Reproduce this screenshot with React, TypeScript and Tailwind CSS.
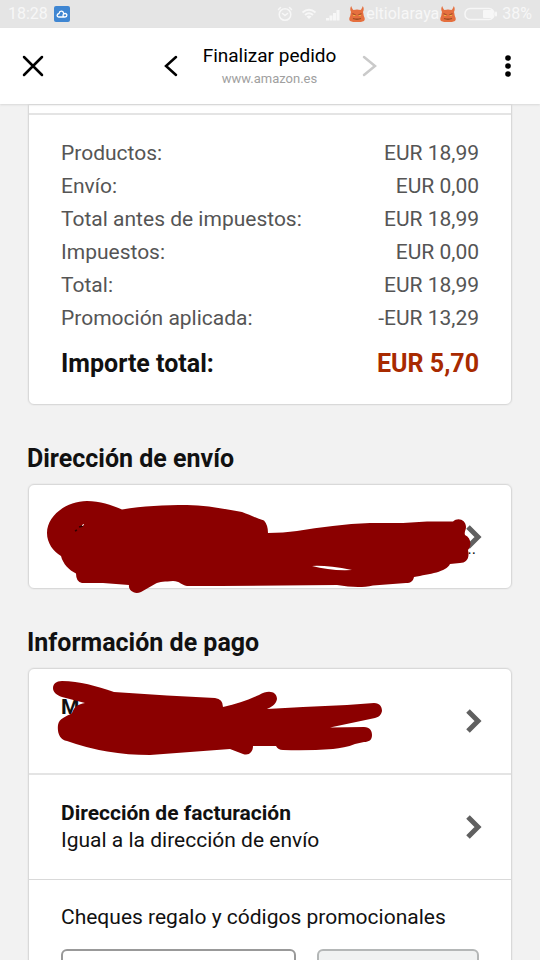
import React from "react";

const totals = [
  ["Productos:", "EUR 18,99"],
  ["Envío:", "EUR 0,00"],
  ["Total antes de impuestos:", "EUR 18,99"],
  ["Impuestos:", "EUR 0,00"],
  ["Total:", "EUR 18,99"],
  ["Promoción aplicada:", "-EUR 13,29"],
];

function Chevron() {
  return (
    <svg className="h-6 w-4 shrink-0" viewBox="0 0 16 24" fill="none" stroke="#606060" strokeWidth="5" aria-hidden="true">
      <path d="M2 2 L12 12 L2 22" />
    </svg>
  );
}

function Devil() {
  return (
    <svg className="h-4 w-4 shrink-0" viewBox="0 0 16 16" aria-hidden="true">
      <path d="M2.200 0 C1 2 1 4 2 6 C1.500 8 1.500 9 1 10.500 C0 12 0 14 1 15 C3 16 5 16 8 16 C11 16 13 16 15 15 C16 14 16 12 15 10.500 C14.500 9 14.500 8 14 6 C15 4 15 2 13.800 0 C13 2 12.500 3.500 11.500 4 C9 3.300 7 3.300 4.500 4 C3.500 3.500 3 2 2.200 0Z" fill="#e56f3e" />
      <path d="M3.500 7.500 L7 9.200 M12.500 7.500 L9 9.200" stroke="#a9502a" strokeWidth="1.200" />
      <path d="M4 9.500h2.500M9.500 9.500H12" stroke="#f0b040" strokeWidth="1.200" />
      <path d="M4 12.500 Q8 14 12 12.500" stroke="#9a4a20" strokeWidth="1.300" fill="none" />
    </svg>
  );
}

function StatusBar() {
  return (
    <div className="flex h-7 shrink-0 items-center bg-[#e5e5e5] pr-2 pl-2 text-base text-[#f7f7f7]">
      <span>18:28</span>
      <svg className="ml-1.5 h-4 w-4" viewBox="0 0 16 16" aria-hidden="true">
        <rect width="16" height="16" rx="2" fill="#3f86d2" />
        <path d="M5 11 C2.500 11 2.500 8 5 7.500 C5.500 4.500 9 4.500 9.500 7 M5 11 H11 C13.500 11 13.500 7.500 11 7.500 C9 7.500 8.500 9.500 9.500 10.500" fill="none" stroke="#fff" strokeWidth="1.300" strokeLinecap="round" />
      </svg>
      <div className="ml-auto flex items-center">
        <svg className="h-4 w-4" viewBox="0 0 16 16" fill="none" stroke="#f7f7f7" strokeWidth="1.500" strokeLinecap="round" aria-hidden="true">
          <circle cx="8" cy="8.500" r="5.800" />
          <path d="M5.500 7.500 L8 9.500 L10.500 7.500M1.500 3.500l2-2M14.500 3.500l-2-2" />
        </svg>
        <svg className="ml-2 h-4 w-4" viewBox="0 0 16 16" fill="none" stroke="#f7f7f7" strokeWidth="2" aria-hidden="true">
          <path d="M1.500 6.500 Q8 1 14.500 6.500M4 9 Q8 5.500 12 9" />
          <path d="M5.500 10.500 L8 13 L10.500 10.500 Q8 8.500 5.500 10.500Z" fill="#f7f7f7" stroke="none" />
        </svg>
        <svg className="ml-2 h-4 w-4" viewBox="0 0 16 16" fill="#f7f7f7" aria-hidden="true">
          <path d="M1 12h3v2.500H1zM4.500 9.500h3v5h-3zM8 7h3v7.500H8zM11.500 4h3v10.500h-3z" />
        </svg>
        <span className="ml-2 flex items-center">
          <Devil />
          <span className="px-px">eltiolaraya</span>
          <Devil />
        </span>
        <svg className="ml-2 h-4 w-[34px]" viewBox="0 0 34 16" aria-hidden="true">
          <rect x="1" y="2.500" width="29" height="11" rx="5" fill="none" stroke="#f7f7f7" strokeWidth="1.500" />
          <rect x="19" y="4" width="10" height="8" rx="1" fill="#f7f7f7" />
          <rect x="31" y="5.500" width="2" height="5" rx="1" fill="#f7f7f7" />
        </svg>
        <span className="ml-1">38%</span>
      </div>
    </div>
  );
}

function TitleBar() {
  return (
    <header className="z-10 grid h-[76px] shrink-0 grid-cols-[1fr_auto_1fr] items-center bg-white px-[22px] shadow-[0_1px_2px_#d8d8d8]">
      <button type="button" aria-label="Cerrar" className="justify-self-start">
        <svg className="h-[22px] w-[22px]" viewBox="0 0 22 22" stroke="#000" strokeWidth="2.500" strokeLinecap="round" aria-hidden="true">
          <path d="M2 2 L20 20 M20 2 L2 20" />
        </svg>
      </button>
      <div className="flex items-center gap-6">
        <button type="button" aria-label="Atrás">
          <svg className="h-[22px] w-4" viewBox="0 0 16 22" fill="none" stroke="#000" strokeWidth="2.500" strokeLinecap="round" aria-hidden="true">
            <path d="M13 2 L3 11 L13 20" />
          </svg>
        </button>
        <div className="pt-px text-center">
          <h1 className="text-[19px] leading-6 text-black">Finalizar pedido</h1>
          <p className="text-[13px] leading-[22px] text-[#a0a0a0]">www.amazon.es</p>
        </div>
        <button type="button" aria-label="Adelante" className="pl-px">
          <svg className="h-[22px] w-4" viewBox="0 0 16 22" fill="none" stroke="#cacaca" strokeWidth="2.500" strokeLinecap="round" aria-hidden="true">
            <path d="M3 2 L14 11 L3 20" />
          </svg>
        </button>
      </div>
      <button type="button" aria-label="Más opciones" className="justify-self-end">
        <svg className="h-[22px] w-5" viewBox="0 0 20 22" fill="#000" aria-hidden="true">
          <circle cx="10" cy="3" r="2.800" />
          <circle cx="10" cy="11" r="2.800" />
          <circle cx="10" cy="19" r="2.800" />
        </svg>
      </button>
    </header>
  );
}

function AddressScribble() {
  return (
    <svg className="pointer-events-none absolute -top-px -left-px h-[112px] w-[485px]" viewBox="28 484 485 112" aria-label="Dirección tachada" role="img">
      <path
        fill="#8b0000"
        d="M87 501 C100 501 111 505 122 509.500 C143 506 164 505 187 505 C205 505 225 509 242 512 C250 515 256 518 264 520.500 Q268 525 268 533 C278 533 288 532 297 531 C320 527 345 524 370 523 H403 L427 521.500 L453 521.500 C458 517 466 520 466 527 C466 530 464 532 465 535 C471 538 472 545 468 550 C470 559 466 563 460 563 L450 564 C446 572 430 574 414 577 C413 581 411 583 406 583 L373 585.500 C361 588 350 587 337 585 L220 586 H187 C181 585 180 581 173 581 C165 582 160 581 155 584 L141 592 C134 595 128 590 129 585 L103 583 H82 Q76 582 76 573.500 C69 570 63 564 61 556 C53 551 47 543 47 533 C47 516 66 501 87 501Z"
      />
      <path fill="#fff" d="M312 566 Q326 565 352 570 Q330 571 312 566Z" />
      <path d="M83 526 L79 527 M77 530 L75 531" stroke="#300" strokeWidth="1.500" />
      <path d="M84 524.500 L82 525.500" stroke="#fff" strokeWidth="1" />
    </svg>
  );
}

function PaymentScribble() {
  return (
    <svg className="pointer-events-none absolute -top-px -left-px h-[106px] w-[485px]" viewBox="28 668 485 106" aria-label="Tarjeta tachada" role="img">
      <path
        fill="#8b0000"
        d="M62 681 C80 681 96 686 114 692 L167 695.500 L215 698 Q223 699 223 707 C237 704 248 700 259 695 C269 689 277 692 277 699 C276 705 271 707 267 709 L303 707 L347 705 L374 703 C380 703 382 707 382 711 C381 715 379 717 375 718 L330 727.500 L364 727 C370 727 372 731 372 735 C372 740 369 742 364 742 L355 744 C348 747 340 748 333 749 Q307 751 283 750 Q278 750 276 746 H253 C253 752 249 756 243 754 L230 749 Q190 752 150 755 Q106 755 67 741 C60 740 57 733 58 725 C59 718 66 717 72 713 C74 707 78 704 85 703 L62 697 C56 695 53 692 53 688 C53 684 56 681 62 681Z"
      />
    </svg>
  );
}

const card = "border border-[#d9d9d9] bg-white shadow-[0_0_0_1px_#ececec]";
const heading = "-ml-px mt-9 mb-[7px] text-[25px] leading-9 font-bold";

export default function App() {
  return (
    <div className="flex h-screen flex-col overflow-hidden bg-[#f2f2f2] font-['Roboto','Liberation_Sans',sans-serif] text-[#111]">
      <StatusBar />
      <TitleBar />
      <main className="min-h-0 flex-1 overflow-hidden px-7 text-[21px] leading-[27px]">
        <section className={`${card} rounded-b-md`}>
          <div className="h-[10px] border-b-2 border-[#e4e4e4]" />
          <div className="px-8 pt-[22px] pb-[22px]">
            <dl className="text-[#555]">
              {totals.map(([label, value]) => (
                <div key={label} className="flex justify-between leading-[33px]">
                  <dt>{label}</dt>
                  <dd>{value}</dd>
                </div>
              ))}
              <div className="mt-[11px] flex justify-between text-[25px] leading-9 font-bold">
                <dt className="text-[#111]">Importe total:</dt>
                <dd className="text-[#a82a00]">EUR 5,70</dd>
              </div>
            </dl>
          </div>
        </section>

        <h2 className={heading}>Dirección de envío</h2>
        <section className={`${card} relative rounded-md`}>
          <a href="#direccion" aria-label="Cambiar dirección de envío" className="flex h-[103px] items-center justify-end pr-[29px] pl-8">
            <span className="mt-6 -mr-2.5 text-base">...</span>
            <Chevron />
          </a>
          <AddressScribble />
        </section>

        <h2 className={heading}>Información de pago</h2>
        <section className={`${card} rounded-t-md`}>
          <div className="relative border-b-2 border-[#e4e4e4]">
            <a href="#pago" className="flex h-[104px] items-center justify-between pr-[29px] pl-8">
              <span className="pb-7 font-bold">M</span>
              <Chevron />
            </a>
            <PaymentScribble />
          </div>
          <a href="#facturacion" className="flex h-[105px] items-center justify-between border-b border-[#d9d9d9] pr-[29px] pl-8">
            <span>
              <strong className="block font-bold">Dirección de facturación</strong>
              <span className="block">Igual a la dirección de envío</span>
            </span>
            <Chevron />
          </a>
          <form className="px-8 pt-6 pb-8">
            <label htmlFor="codigo" className="block">
              Cheques regalo y códigos promocionales
            </label>
            <div className="mt-[18px] grid grid-cols-[236fr_162fr] gap-[21px]">
              <input id="codigo" type="text" className="h-12 min-w-0 rounded-md border-2 border-[#999] bg-white px-3" />
              <button type="button" aria-label="Aplicar" className="h-12 rounded-md border-2 border-[#b4b7b7] bg-[#f0f2f2]" />
            </div>
          </form>
        </section>
      </main>
    </div>
  );
}
